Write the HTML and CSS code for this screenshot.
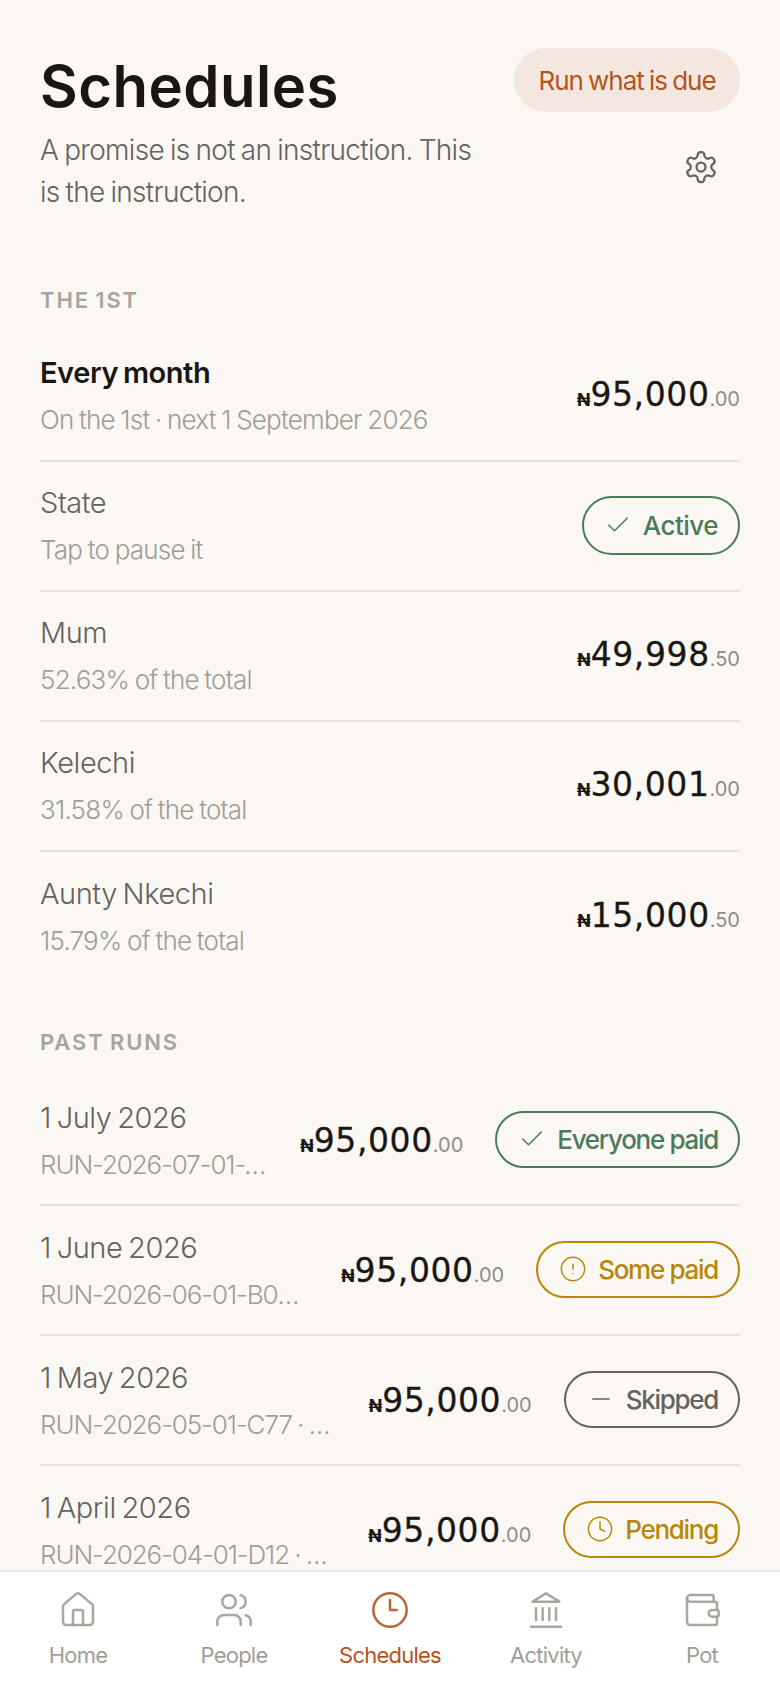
FILE: index.html
```html
<!DOCTYPE html>
<html lang="en">
  <head>
    <meta charset="UTF-8" />
    <meta name="viewport" content="width=device-width, initial-scale=1.0" />
    <title>Schedules</title>
    <link rel="stylesheet" href="styles.css">
  </head>
  <body>
    <main class="content">
      <header class="top">
        <div class="topText">
          <h1>Schedules</h1>
          <p>A promise is not an instruction. This is the instruction.</p>
        </div>
        <div class="topActions">
          <button class="runBtn">Run what is due</button>
          <svg class="gear" viewBox="0 0 24 24"><path d="M12.22 2h-.44a2 2 0 0 0-2 2v.18a2 2 0 0 1-1 1.73l-.43.25a2 2 0 0 1-2 0l-.15-.08a2 2 0 0 0-2.73.73l-.22.38a2 2 0 0 0 .73 2.73l.15.1a2 2 0 0 1 1 1.72v.51a2 2 0 0 1-1 1.74l-.15.09a2 2 0 0 0-.73 2.73l.22.38a2 2 0 0 0 2.73.73l.15-.08a2 2 0 0 1 2 0l.43.25a2 2 0 0 1 1 1.73V20a2 2 0 0 0 2 2h.44a2 2 0 0 0 2-2v-.18a2 2 0 0 1 1-1.73l.43-.25a2 2 0 0 1 2 0l.15.08a2 2 0 0 0 2.73-.73l.22-.39a2 2 0 0 0-.73-2.73l-.15-.08a2 2 0 0 1-1-1.74v-.5a2 2 0 0 1 1-1.74l.15-.09a2 2 0 0 0 .73-2.73l-.22-.38a2 2 0 0 0-2.73-.73l-.15.08a2 2 0 0 1-2 0l-.43-.25a2 2 0 0 1-1-1.73V4a2 2 0 0 0-2-2z"/><circle cx="12" cy="12" r="3"/></svg>
        </div>
      </header>

      <section class="first">
        <h2>THE 1ST</h2>
        <div class="row">
          <div class="rowText">
            <strong class="strongName">Every month</strong>
            <span class="sub">On the 1st · next 1 September 2026</span>
          </div>
          <span class="amount"><i>₦</i><b>95,000</b><small>.00</small></span>
        </div>
        <div class="row">
          <div class="rowText">
            <strong>State</strong>
            <span class="sub">Tap to pause it</span>
          </div>
          <span class="pill green statePill">
            <svg viewBox="0 0 24 24"><path d="M20 6 9 17l-5-5"/></svg>
            Active
          </span>
        </div>
        <div class="row">
          <div class="rowText">
            <strong>Mum</strong>
            <span class="sub">52.63% of the total</span>
          </div>
          <span class="amount"><i>₦</i><b>49,998</b><small>.50</small></span>
        </div>
        <div class="row">
          <div class="rowText">
            <strong>Kelechi</strong>
            <span class="sub">31.58% of the total</span>
          </div>
          <span class="amount"><i>₦</i><b>30,001</b><small>.00</small></span>
        </div>
        <div class="row">
          <div class="rowText">
            <strong>Aunty Nkechi</strong>
            <span class="sub">15.79% of the total</span>
          </div>
          <span class="amount"><i>₦</i><b>15,000</b><small>.50</small></span>
        </div>
      </section>

      <section class="past">
        <h2>PAST RUNS</h2>
        <div class="row">
          <div class="rowText">
            <strong>1 July 2026</strong>
            <span class="sub">RUN-2026-07-01-A41 · 3 people</span>
          </div>
          <span class="amount"><i>₦</i><b>95,000</b><small>.00</small></span>
          <span class="pill green">
            <svg viewBox="0 0 24 24"><path d="M20 6 9 17l-5-5"/></svg>
            Everyone paid
          </span>
        </div>
        <div class="row">
          <div class="rowText">
            <strong>1 June 2026</strong>
            <span class="sub">RUN-2026-06-01-B09 · 3 people</span>
          </div>
          <span class="amount"><i>₦</i><b>95,000</b><small>.00</small></span>
          <span class="pill amber">
            <svg viewBox="0 0 24 24"><circle cx="12" cy="12" r="10"/><path d="M12 8v4M12 16h.01"/></svg>
            Some paid
          </span>
        </div>
        <div class="row">
          <div class="rowText">
            <strong>1 May 2026</strong>
            <span class="sub">RUN-2026-05-01-C77 · 3 people</span>
          </div>
          <span class="amount"><i>₦</i><b>95,000</b><small>.00</small></span>
          <span class="pill grey">
            <svg viewBox="0 0 24 24"><path d="M5 12h14"/></svg>
            Skipped
          </span>
        </div>
        <div class="row">
          <div class="rowText">
            <strong>1 April 2026</strong>
            <span class="sub">RUN-2026-04-01-D12 · 3 people</span>
          </div>
          <span class="amount"><i>₦</i><b>95,000</b><small>.00</small></span>
          <span class="pill amber">
            <svg viewBox="0 0 24 24"><circle cx="12" cy="12" r="10"/><path d="M12 6v6l4 2"/></svg>
            Pending
          </span>
        </div>
      </section>
    </main>

    <nav class="tabs">
      <a class="tab">
        <svg viewBox="0 0 24 24"><path d="M15 21v-8a1 1 0 0 0-1-1h-4a1 1 0 0 0-1 1v8"/><path d="M3 10a2 2 0 0 1 .709-1.528l7-5.999a2 2 0 0 1 2.582 0l7 5.999A2 2 0 0 1 21 10v9a2 2 0 0 1-2 2H5a2 2 0 0 1-2-2z"/></svg>
        Home
      </a>
      <a class="tab">
        <svg viewBox="0 0 24 24"><path d="M16 21v-2a4 4 0 0 0-4-4H6a4 4 0 0 0-4 4v2"/><path d="M16 3.128a4 4 0 0 1 0 7.744"/><path d="M22 21v-2a4 4 0 0 0-3-3.87"/><circle cx="9" cy="7" r="4"/></svg>
        People
      </a>
      <a class="tab active">
        <svg viewBox="0 0 24 24"><circle cx="12" cy="12" r="10"/><path d="M12 6v6h4"/></svg>
        Schedules
      </a>
      <a class="tab">
        <svg viewBox="0 0 24 24"><path d="M3 22h18"/><path d="M6 18v-7"/><path d="M10 18v-7"/><path d="M14 18v-7"/><path d="M18 18v-7"/><path d="M12 2l8 5H4z"/></svg>
        Activity
      </a>
      <a class="tab">
        <svg viewBox="0 0 24 24"><path d="M19 7V4a1 1 0 0 0-1-1H5a2 2 0 0 0 0 4h15a1 1 0 0 1 1 1v4h-3a2 2 0 0 0 0 4h3a1 1 0 0 0 1-1v-2a1 1 0 0 0-1-1"/><path d="M3 5v14a2 2 0 0 0 2 2h15a1 1 0 0 0 1-1v-4"/></svg>
        Pot
      </a>
    </nav>
  </body>
</html>
```

FILE: styles.css
```css
* {
  margin: 0;
  padding: 0;
  box-sizing: border-box;
}

html,
body {
  height: 100%;
}

body {
  display: flex;
  flex-direction: column;
  height: 1688px;
  overflow: hidden;
  background: #fbf8f4;
  color: #1a1613;
  font-family: Inter, "Noto Sans", sans-serif;
}

svg {
  fill: none;
  stroke: currentColor;
  stroke-width: 1.5;
  stroke-linecap: round;
  stroke-linejoin: round;
  flex-shrink: 0;
}

.content {
  flex: 1;
  min-height: 0;
  overflow: hidden;
  padding: 48px 40px 0;
}

.top {
  display: flex;
  justify-content: space-between;
}

.topText {
  width: 450px;
}

h1 {
  margin-top: 2px;
  font-size: 58px;
  line-height: 72px;
  font-weight: 600;
  letter-spacing: 0.5px;
}

.topText p {
  margin-top: 7px;
  font-size: 28px;
  line-height: 42px;
  letter-spacing: -0.025em;
  word-spacing: -1.2px;
  font-weight: 300;
  color: #66625d;
}

.topActions {
  display: flex;
  flex-direction: column;
  align-items: flex-end;
}

.runBtn {
  width: 226px;
  height: 64px;
  border: none;
  border-radius: 32px;
  background: #f4e7df;
  color: #b5531f;
  font: 400 26px Inter, sans-serif;
  letter-spacing: -0.04em;
  word-spacing: -1px;
  cursor: pointer;
}

.gear {
  width: 36px;
  height: 36px;
  margin: 37px 21px 0 0;
  color: #66625d;
}

h2 {
  font-size: 22px;
  line-height: 28px;
  font-weight: 600;
  letter-spacing: 0.085em;
  word-spacing: -2px;
  color: #a8a49e;
}

.first {
  margin-top: 73px;
}

.past {
  margin-top: 46px;
}

.first h2 {
  margin-bottom: 18px;
}

.past h2 {
  margin-bottom: 20px;
}

.row {
  display: flex;
  align-items: center;
  justify-content: space-between;
  gap: 32px;
  height: 130px;
  padding-bottom: 2px;
  border-bottom: 2px solid #e6e2dc;
}

.first .row:last-child {
  border-bottom: none;
}

.rowText {
  flex: 1;
  min-width: 0;
  display: flex;
  flex-direction: column;
  gap: 13px;
}

.past .rowText {
  padding-top: 2px;
}

.rowText strong {
  font-size: 29px;
  line-height: 36px;
  font-weight: 300;
  letter-spacing: -0.015em;
  word-spacing: -2px;
  color: #66625d;
}

.rowText .strongName {
  font-weight: 600;
  color: #1a1613;
}

.sub {
  font-size: 26px;
  line-height: 32px;
  font-weight: 300;
  letter-spacing: -0.03em;
  word-spacing: -1px;
  color: #a09c96;
  white-space: nowrap;
  overflow: hidden;
  text-overflow: ellipsis;
}

.past .sub {
  letter-spacing: -0.042em;
}

.amount {
  flex-shrink: 0;
  padding-top: 3px;
  font-size: 33px;
  line-height: 40px;
  white-space: nowrap;
}

.past .amount {
  padding-top: 7px;
}

.amount b {
  font-family: "DejaVu Sans", sans-serif;
  font-weight: 400;
  letter-spacing: 0.6px;
  -webkit-text-stroke: 0.3px currentColor;
}

.amount i {
  font-style: normal;
  font-size: 18px;
  font-weight: 700;
}

.amount small {
  font-size: 20px;
  font-weight: 400;
  color: #8f8b86;
}

.pill {
  flex-shrink: 0;
  display: flex;
  align-items: center;
  gap: 11px;
  height: 57px;
  padding: 0 20px 0 21px;
  border: 2px solid currentColor;
  border-radius: 29px;
  font-size: 26px;
  font-weight: 500;
  letter-spacing: -0.05em;
  white-space: nowrap;
}

.statePill {
  height: 59px;
  border-radius: 30px;
  padding-left: 20px;
  letter-spacing: -0.02em;
}

.pill svg {
  width: 28px;
  height: 28px;
  stroke-width: 1.25;
}

.green {
  color: #4a7c59;
}

.amber {
  color: #b8860b;
}

.grey {
  color: #66625d;
}

.tabs {
  flex-shrink: 0;
  display: grid;
  grid-template-columns: repeat(5, 1fr);
  height: 118px;
  padding-top: 18px;
  border-top: 2px solid #ebe9e6;
  background: #fff;
}

.tab {
  display: flex;
  flex-direction: column;
  align-items: center;
  gap: 9px;
  font-size: 22px;
  line-height: 32px;
  letter-spacing: -0.035em;
  color: #a09d98;
}

.tab svg {
  width: 40px;
  height: 40px;
  stroke-opacity: 0.9;
}

.tab.active {
  color: #b5531f;
}
```
